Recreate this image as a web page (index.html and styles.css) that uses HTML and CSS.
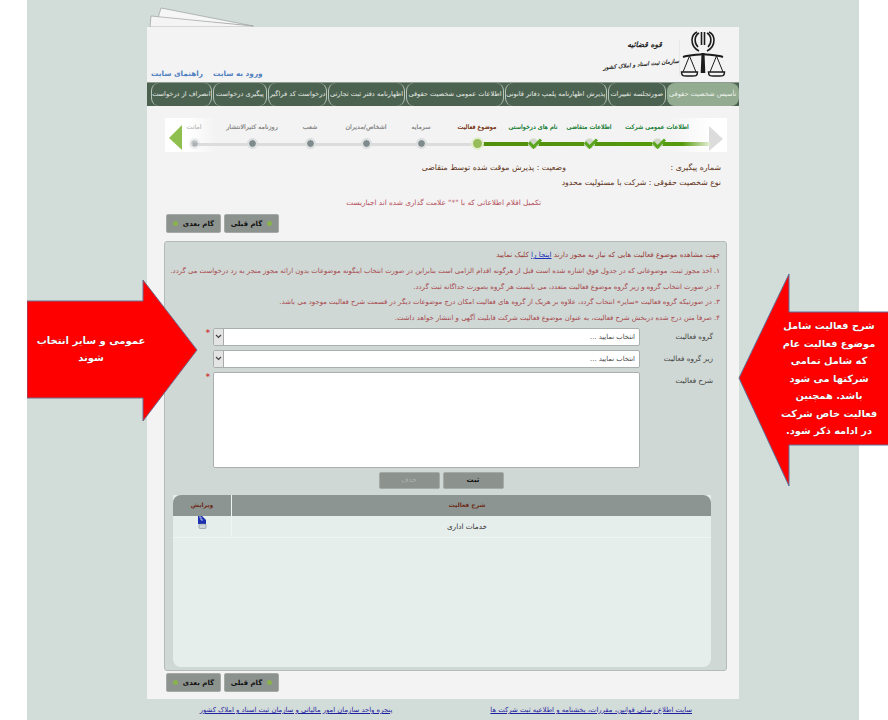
FILE: index.html
```html
<!DOCTYPE html>
<html lang="fa">
<head>
<meta charset="utf-8">
<title>ثبت شرکت ها</title>
<link rel="stylesheet" href="styles.css">
</head>
<body>
<div class="stage">
  <svg class="papers" width="112" height="22" viewBox="0 0 112 22"><path d="M11 11 L14 1 L106 19Z" fill="#f6f6f6" stroke="#8f9492" stroke-width=".6"/><path d="M3 20 L4 9 L106 19 L106 20Z" fill="#f4f4f4" stroke="#8f9492" stroke-width=".6"/></svg>
  <main class="card">
    <header class="head">
      <div class="login"><a>ورود به سایت</a><a>راهنمای سایت</a></div>
      <div class="brand">
        <div class="brand-text"><div class="b1">قوه قضائیه</div><div class="b2">سازمان ثبت اسناد و املاک کشور</div></div>
        <svg class="emblem" width="46" height="48" viewBox="0 0 46 48" fill="none" stroke="#1c1c1c" stroke-width="1.300">
          <path d="M21.500 2v13M24.500 2v13M19 3c-5 3-5 10-1 14M27 3c5 3 5 10 1 14M17 2c-4 2-5 5-5 8 0 5 3 9 7 11M29 2c4 2 5 5 5 8 0 5-3 9-7 11" stroke-width="1.600"/>
          <path d="M21.500 23h3l.8 20h-4.600Z" fill="#1c1c1c" stroke="none"/>
          <path d="M3 27c6-2 14-2 20-3 6 1 14 1 20 3" stroke-width="2"/>
          <path d="M9.500 26L3 42M9.500 26L16 42M36.500 26L30 42M36.500 26L43 42" stroke-width="1"/>
          <path d="M1.500 42h16c0 5-3 4-8 4s-8 1-8-4ZM28.500 42h16c0 5-3 4-8 4s-8 1-8-4Z" stroke-width="1.500"/>
        </svg>
      </div>
    </header>
    <nav class="tabs">
      <a class="tab t1 on">تأسیس شخصیت حقوقی</a>
      <a class="tab t2">صورتجلسه تغییرات</a>
      <a class="tab t3">پذیرش اظهارنامه پلمپ دفاتر قانونی</a>
      <a class="tab t4">اطلاعات عمومی شخصیت حقوقی</a>
      <a class="tab t5">اظهارنامه دفتر ثبت تجارتی</a>
      <a class="tab t6">درخواست کد فراگیر</a>
      <a class="tab t7">پیگیری درخواست</a>
      <a class="tab t8">انصراف از درخواست</a>
    </nav>
    <section class="wizard">
      <svg class="wz-next" width="16" height="26" viewBox="0 0 16 26"><path d="M1 0L15 13L1 25Z" fill="#dcdcdc"/></svg>
      <div class="steps">
        <div class="step s1 done"><span>اطلاعات عمومی شرکت</span><i></i></div>
        <div class="step s2 done"><span>اطلاعات متقاضی</span><i></i></div>
        <div class="step s3 done"><span>نام های درخواستی</span><i></i></div>
        <div class="step s4 cur"><span>موضوع فعالیت</span><i></i></div>
        <div class="step s5"><span>سرمایه</span><i></i></div>
        <div class="step s6"><span>اشخاص/مدیران</span><i></i></div>
        <div class="step s7"><span>شعب</span><i></i></div>
        <div class="step s8"><span>روزنامه کثیرالانتشار</span><i></i></div>
        <div class="step s9 fade"><span>امانت</span><i></i></div>
      </div>
      <svg class="wz-prev" width="14" height="26" viewBox="0 0 14 26"><path d="M13 0L0 13L13 25Z" fill="#8fc04f"/></svg>
    </section>
    <section class="info">
      <div class="info-row"><span class="track-no">شماره پیگیری :</span><span>وضعیت : پذیرش موقت شده توسط متقاضی</span></div>
      <div class="info-row">نوع شخصیت حقوقی : شرکت با مسئولیت محدود</div>
    </section>
    <p class="must">تکمیل اقلام اطلاعاتی که با "*" علامت گذاری شده اند اجباریست</p>
    <div class="pager"><button class="btn">گام بعدی<b class="led"></b></button><button class="btn"><b class="led"></b>گام قبلی</button></div>
    <section class="panel">
      <p class="lead">جهت مشاهده موضوع فعالیت هایی که نیاز به مجوز دارند <a>اینجا را</a> کلیک نمایید</p>
      <ol class="notes">
        <li>۱. اخذ مجوز ثبت، موضوعاتی که در جدول فوق اشاره شده است قبل از هرگونه اقدام الزامی است بنابراین در صورت انتخاب اینگونه موضوعات بدون ارائه مجوز منجر به رد درخواست می گردد.</li>
        <li>۲. در صورت انتخاب گروه و زیر گروه موضوع فعالیت متعدد، می بایست هر گروه بصورت جداگانه ثبت گردد.</li>
        <li>۳. در صورتیکه گروه فعالیت «سایر» انتخاب گردد، علاوه بر هریک از گروه های فعالیت امکان درج موضوعات دیگر در قسمت شرح فعالیت موجود می باشد.</li>
        <li>۴. صرفا متن درج شده دربخش شرح فعالیت، به عنوان موضوع فعالیت شرکت قابلیت آگهی و انتشار خواهد داشت.</li>
      </ol>
      <div class="form">
        <div class="row"><label>گروه فعالیت</label><div class="sel"><span>انتخاب نمایید ...</span><em><svg width="7" height="5" viewBox="0 0 7 5"><path d="M1 1l2.500 2.500L6 1" fill="none" stroke="#444" stroke-width="1.200"/></svg></em></div><b class="star">*</b></div>
        <div class="row"><label>زیر گروه فعالیت</label><div class="sel"><span>انتخاب نمایید ...</span><em><svg width="7" height="5" viewBox="0 0 7 5"><path d="M1 1l2.500 2.500L6 1" fill="none" stroke="#444" stroke-width="1.200"/></svg></em></div></div>
        <div class="row"><label>شرح فعالیت</label><div class="area"></div><b class="star">*</b></div>
      </div>
      <div class="actions"><button class="act">ثبت</button><button class="act off">حذف</button></div>
      <div class="grid">
        <div class="g-head"><div class="c-main">شرح فعالیت</div><div class="c-edit">ویرایش</div></div>
        <div class="g-row"><div class="c-main">خدمات اداری</div><div class="c-edit">
          <svg width="10" height="13" viewBox="0 0 10 13"><path d="M1 0h4l4 4v4H1Z" fill="#1c2fb0"/><path d="M2 1h2v3h2" fill="none" stroke="#dfe6f5" stroke-width=".8"/><rect x="2" y="8" width="7" height="4.500" rx="1" fill="#cfd6da" stroke="#7d8a92" stroke-width=".6"/></svg>
        </div></div>
      </div>
    </section>
    <div class="pager low"><button class="btn">گام بعدی<b class="led"></b></button><button class="btn"><b class="led"></b>گام قبلی</button></div>
  </main>
  <footer class="foot"><a>سایت اطلاع رسانی قوانین، مقررات، بخشنامه و اطلاعیه ثبت شرکت ها</a><a>پنجره واحد سازمان امور مالیاتی و سازمان ثبت اسناد و املاک کشور</a></footer>
</div>
<aside class="arrow a-left">
  <svg width="172" height="142" viewBox="0 0 172 142"><path d="M0 21H116V0L170 70L116 141V118H0Z" fill="#f00" stroke="#6f6a8c" stroke-width="1"/></svg>
  <div class="arrow-text">عمومی و سایر انتخاب شوند</div>
</aside>
<aside class="arrow a-right">
  <svg width="152" height="215" viewBox="0 0 152 215"><path d="M151 39H51V1L1 105L51 213V172H151Z" fill="#f00" stroke="#5d6f98" stroke-width="1"/></svg>
  <div class="arrow-text">شرح فعالیت شامل<br>موضوع فعالیت عام<br>که شامل تمامی<br>شرکتها می شود<br>باشد. همچنین<br>فعالیت خاص شرکت<br>در ادامه ذکر شود.</div>
</aside>
</body>
</html>
```
FILE: styles.css
```css
*{box-sizing:border-box}
html,body{margin:0;height:720px;overflow:hidden;background:#fff}
body{position:relative;font-family:"DejaVu Sans",sans-serif;font-size:8px;color:#333}
a{cursor:pointer}
.stage{position:relative;margin-left:27px;width:832px;height:720px;background:#d2dcd8;padding-top:27px}
.papers{position:absolute;left:120px;top:7px}
.card{position:relative;margin-left:120px;width:592px;height:672px;background:#f3f3f3}
.head{height:55px;display:flex;justify-content:space-between;align-items:flex-start;direction:ltr}
.login{direction:rtl;display:flex;gap:10px;margin:42px 0 0 4px;font-size:7.300px;font-weight:bold;color:#5080c0;white-space:nowrap}
.brand{display:flex;align-items:flex-start;margin-right:13px}
.brand-text{direction:rtl;margin-top:13px;color:#222;text-align:center;font-style:italic;width:74px;border-right:1px solid #e8e8e8;height:36px}
.b1{font-size:7.500px;font-weight:bold;margin:0 0 10px 0;padding-left:4px;line-height:10px}
.b2{font-size:5.500px;font-weight:bold;white-space:nowrap;line-height:8px;transform:rotate(-5deg)}
.emblem{margin-top:3px}
.tabs{height:24px;background:#4c6250;border-top:1px solid #8d9e90;display:flex;direction:rtl}
.tab{height:23px;border:1px solid #b8c6ba;border-width:0 1px;border-radius:8px;color:#e6ece6;font-size:6.600px;line-height:22px;text-align:center;white-space:nowrap;margin-left:1px}
.tab.on{background:#93ab91;color:#f1f5ef;border:0}
.t1{width:73px}.t2{width:58px}.t3{width:103px}.t4{width:98px}.t5{width:78px}.t6{width:59px}.t7{width:55px}.t8{width:61px;margin-left:4px}
.wizard{position:relative;margin:12px 12px 0 18px;height:34px;direction:rtl;background:linear-gradient(to right,#fff 4%,#f3f3f3 9%,#f3f3f3 90%,#fff 97%)}
.wz-next{position:absolute;right:3px;top:8px}
.wz-prev{position:absolute;left:4px;top:7px}
.steps{position:absolute;inset:0 0 0 0;display:flex;padding-right:70px}
.steps::before{content:"";position:absolute;left:28px;right:250px;top:25px;height:3px;background:#dcdcdc}
.steps::after{content:"";position:absolute;left:312px;right:17px;top:24px;height:4px;background:linear-gradient(to left,#e6f0d8,#559a0c 12%,#4f8f0a)}
.step{position:relative;z-index:1;width:0;display:flex;flex-direction:column;align-items:center;margin-left:56px;white-space:nowrap}
.step span{font-size:6.300px;line-height:12px;margin-top:3px;color:#8b8b8b;text-shadow:0 0 .4px currentColor}
.step i{display:block;width:11px;height:11px;border-radius:50%;margin-top:5px;background:radial-gradient(circle,#7e8a8c 45%,#c9ced0 55%,#f4f4f4 75%);border:1px solid #d9dcdc;flex:none}
.s1{margin-left:68px}.s7{margin-left:58px}.s8{margin-left:58px}.s9{margin:0}.s5{margin-left:55px}
.done span{color:#25803a}
.done i{background:#cfd6c8;border-color:#e5e8e0;position:relative}
.done i::after{content:"";position:absolute;left:0;top:-1px;width:9px;height:5px;border:solid #5aa51c;border-width:0 0 3px 3px;transform:rotate(-45deg)}
.cur span{color:#7a3a20}
.cur i{width:13px;height:13px;margin-top:4px;background:#97bd5b;border:2px solid #e3edd0}
.fade{opacity:.5}
.info{margin:8px 18px 0 18px;direction:rtl;color:#5f3420;font-size:7.800px;line-height:15px}
.info-row{display:flex;white-space:nowrap}
.track-no{width:155px}
.must{margin:6px 0 0;padding-right:198px;direction:rtl;color:#b5505c;font-size:7.300px;line-height:14px;white-space:nowrap;text-align:right}
.pager{display:flex;direction:ltr;gap:3px;margin:4px 0 0 19px}
.btn{width:55px;height:19px;padding:0;background:#8c928e;border:1px solid #a6aaa7;border-radius:2px;font:bold 7px "DejaVu Sans",sans-serif;color:#111;display:flex;align-items:center;justify-content:center;gap:5px;direction:rtl}
.led{width:5px;height:5px;border-radius:50%;background:#8ab24c;flex:none}
.panel{margin:8px 12px 0 17px;height:430px;background:#cfd8d5;border:1px solid #b4bbb8;border-radius:3px;direction:rtl;padding:8px 6px 0 6px}
.lead{margin:0;font-size:7.100px;line-height:10px;color:#9b3a3a;white-space:nowrap}
.lead a{color:#2233bb;text-decoration:underline}
.notes{list-style:none;margin:4px 0 0;padding:0;color:#a8474c;font-size:6.900px;line-height:15.700px;white-space:nowrap}
.form{margin-top:1px}
.row{display:flex;margin-bottom:4px;position:relative;align-items:flex-start}
.row label{width:80px;flex:none;padding:3px 7px 0 0;font-size:7.200px;line-height:12px;color:#444}
.sel{width:427px;height:18px;background:#fff;border:1px solid #aab0ae;border-radius:2px;display:flex;justify-content:space-between;font-size:6.800px;line-height:16px;color:#444;padding-right:4px}
.sel em{width:10px;background:#e4e4e4;border-right:1px solid #aaa;display:flex;align-items:center;justify-content:center}
.area{width:427px;height:96px;background:#fff;border:1px solid #aab0ae;border-radius:2px}
.star{color:#d04040;margin:2px 3px 0 0;font-size:8px;line-height:8px}
.actions{display:flex;justify-content:center;gap:3px;margin-top:0;direction:ltr;flex-direction:row-reverse;padding-right:9px}
.act{width:61px;height:17px;padding:0;background:#8c928e;border:1px solid #a6aaa7;border-radius:2px;font:bold 7px "DejaVu Sans",sans-serif;color:#111}
.act.off{color:#aeb4b0;font-weight:normal}
.grid{margin:6px 9px 0 2px;height:172px;background:#e6eeec;border-radius:0 0 8px 8px}
.g-head{display:flex;height:21px;background:#8d9593;border-radius:8px 8px 0 0;color:#6b2a16;font-size:6px;font-weight:bold;line-height:20px;text-align:center}
.g-row{display:flex;height:22px;border-bottom:1px solid #f0f4f3;text-align:center;font-size:7.300px;line-height:21px;color:#333}
.c-main{flex:1;padding-right:9px}
.c-edit{width:59px;border-right:1px solid #f0f4f3}
.g-row .c-edit{line-height:0}
.low{margin-top:2px}
.foot{display:flex;direction:rtl;padding:7px 47px 0 0;font-size:6.850px;gap:98px;white-space:nowrap;position:absolute;left:120px;width:592px;top:699px}
.foot a{color:#1f22a0;text-decoration:underline}
.arrow{position:absolute;line-height:0}
.a-left{left:27px;top:280px}
.a-right{left:738px;top:273px}
.arrow-text{position:absolute;color:#fff;font-weight:bold;text-align:center;direction:rtl;text-shadow:0 0 1px #700;font-family:"DejaVu Sans",sans-serif}
.a-left .arrow-text{left:8px;width:112px;top:52px;line-height:17px;font-size:10px}
.a-right .arrow-text{left:36px;width:110px;top:44px;line-height:17.500px;font-size:9.800px}
```
